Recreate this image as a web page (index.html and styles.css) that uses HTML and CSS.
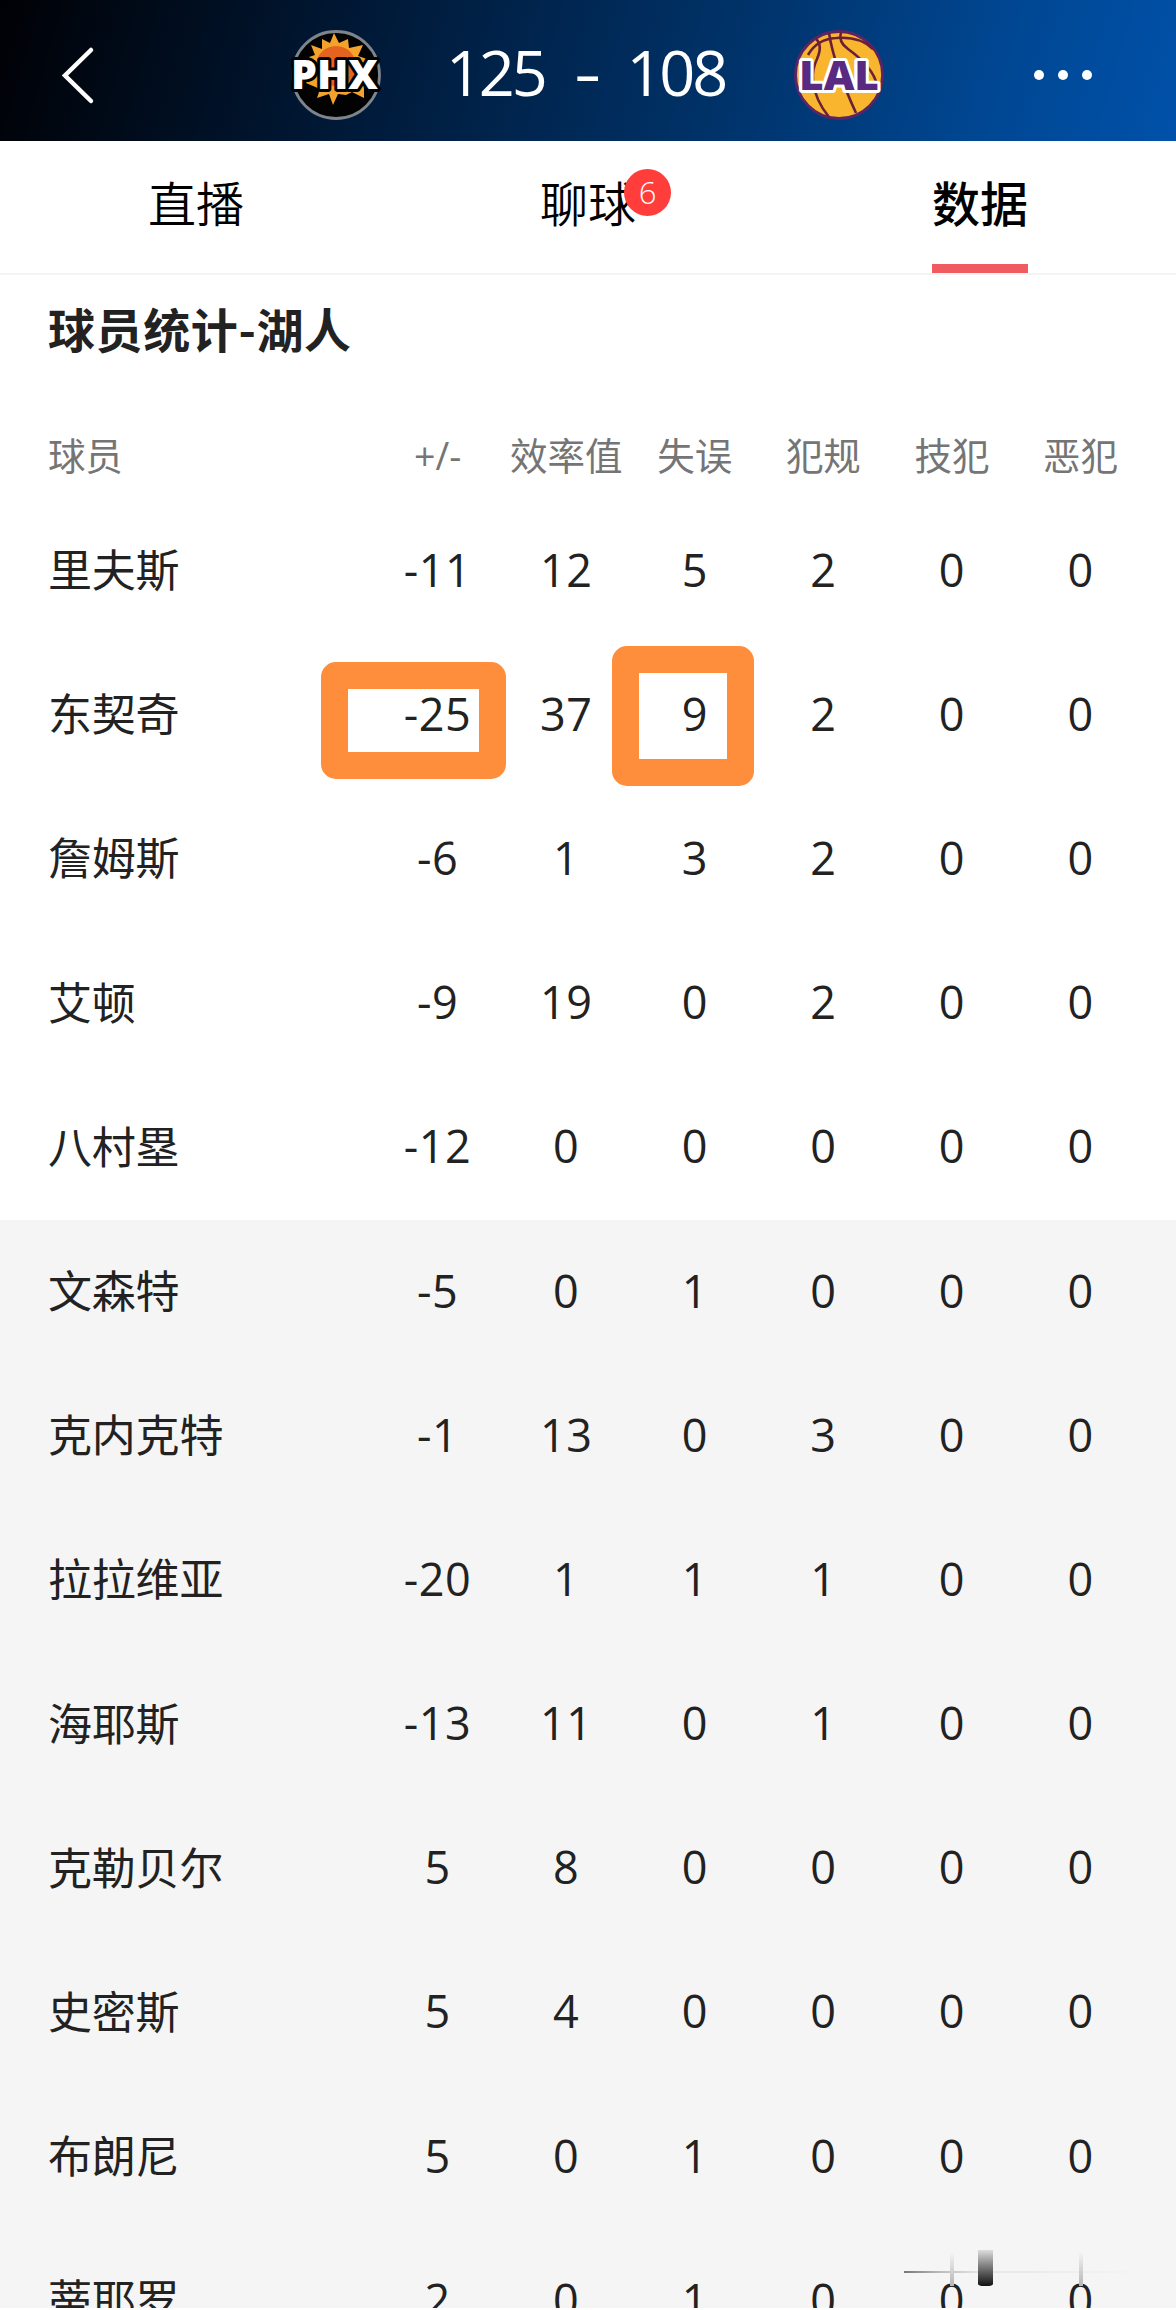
FILE: index.html
```html
<!DOCTYPE html>
<html lang="zh-CN">

<head>
    <meta charset="UTF-8">
    <meta name="viewport" content="width=device-width, initial-scale=1.0">
    <title>球员统计</title>
    <link rel="stylesheet" href="styles.css">
</head>

<body>
    <!-- 比分 -->
    <header class="header">
        <svg class="back" viewBox="0 0 36 60">
            <path d="M31 5 L5 30.500 L31 56" fill="none" stroke="#fff" stroke-width="4.500" stroke-linecap="round" />
        </svg>
        <svg class="logo logo-phx" viewBox="0 0 100 100">
            <circle cx="50" cy="50" r="43.500" fill="#020202" stroke="#7d848c" stroke-width="2.800" />
            <path d="M48 8 L53 18 L62 14 L63 23 L77 20 L72 31 L81 34 L76 40 L78 64 L78 73 L66 67 L60 70 L52 69 L47 80 L43 69 L31 73 L34 64 L20 58 L27 38 L23 32 L29 30 L25 20 L36 24 L36 14 L44 18 Z" fill="#f3a32b" />
            <circle cx="50" cy="41" r="20" fill="#e4641f" />
            <text x="5" y="64" class="logo-text phx-text" textLength="87" lengthAdjust="spacingAndGlyphs">PHX</text>
        </svg>
        <div class="score">
            <span>125</span>
            <span class="dash">-</span>
            <span>108</span>
        </div>
        <svg class="logo logo-lal" viewBox="0 0 100 100">
            <circle cx="50" cy="50" r="43.500" fill="#f8b52d" stroke="#5b2463" stroke-width="2.800" />
            <g fill="none" stroke="#6b2038" stroke-width="2.600">
                <path d="M19 30 Q28 14 47 13 Q71 11 84 24" />
                <path d="M27 14 Q34 20 28 34 Q23 44 24 56 Q26 75 40 92" />
                <path d="M40 8 Q45 40 67 88" />
                <path d="M52 7 Q49 17 59 24 Q84 42 88 60" />
            </g>
            <text x="10" y="65" class="logo-text lal-text" textLength="80" lengthAdjust="spacingAndGlyphs">LAL</text>
        </svg>
        <div class="more"><i></i><i></i><i></i></div>
    </header>

    <nav class="tabs">
        <a class="tab">直播</a>
        <a class="tab">聊球<span class="badge">6</span></a>
        <a class="tab active">数据</a>
    </nav>

    <main class="stats">
        <h1 class="title">球员统计-湖人</h1>

        <div class="row head">
            <span>球员</span><span>+/-</span><span>效率值</span><span>失误</span><span>犯规</span><span>技犯</span><span>恶犯</span>
        </div>

        <!-- 首发 -->
        <div class="row"><span>里夫斯</span><span>-11</span><span>12</span><span>5</span><span>2</span><span>0</span><span>0</span></div>
        <div class="row"><span>东契奇</span><span class="mark mark-wide">-25</span><span>37</span><span class="mark mark-tall">9</span><span>2</span><span>0</span><span>0</span></div>
        <div class="row"><span>詹姆斯</span><span>-6</span><span>1</span><span>3</span><span>2</span><span>0</span><span>0</span></div>
        <div class="row"><span>艾顿</span><span>-9</span><span>19</span><span>0</span><span>2</span><span>0</span><span>0</span></div>
        <div class="row"><span>八村塁</span><span>-12</span><span>0</span><span>0</span><span>0</span><span>0</span><span>0</span></div>

        <!-- 替补 -->
        <div class="bench">
            <div class="row"><span>文森特</span><span>-5</span><span>0</span><span>1</span><span>0</span><span>0</span><span>0</span></div>
            <div class="row"><span>克内克特</span><span>-1</span><span>13</span><span>0</span><span>3</span><span>0</span><span>0</span></div>
            <div class="row"><span>拉拉维亚</span><span>-20</span><span>1</span><span>1</span><span>1</span><span>0</span><span>0</span></div>
            <div class="row"><span>海耶斯</span><span>-13</span><span>11</span><span>0</span><span>1</span><span>0</span><span>0</span></div>
            <div class="row"><span>克勒贝尔</span><span>5</span><span>8</span><span>0</span><span>0</span><span>0</span><span>0</span></div>
            <div class="row"><span>史密斯</span><span>5</span><span>4</span><span>0</span><span>0</span><span>0</span><span>0</span></div>
            <div class="row"><span>布朗尼</span><span>5</span><span>0</span><span>1</span><span>0</span><span>0</span><span>0</span></div>
            <div class="row"><span>蒂耶罗</span><span>2</span><span>0</span><span>1</span><span>0</span><span>0</span><span>0</span></div>
            <div class="smear">
                <i class="smear-line"></i>
                <i class="smear-thin"></i>
                <i class="smear-block"></i>
                <i class="smear-thin smear-right"></i>
            </div>
        </div>
    </main>
</body>

</html>
```
FILE: styles.css
```css
*,
*::after {
    box-sizing: border-box;
}

body {
    margin: 0;
    height: 2310px;
    overflow: hidden;
    background: #fff;
    color: #222;
    font-family: 'Open Sans', 'Noto Sans CJK SC', sans-serif;
}

.header {
    display: flex;
    align-items: center;
    height: 141px;
    padding: 8px 84px 0 60px;
    background: linear-gradient(106deg, #000105 0%, #001a39 32%, #00336a 62%, #004793 84%, #0051aa 100%);
}

.back {
    width: 36px;
    height: 60px;
}

.logo {
    width: 100px;
    height: 100px;
}

.logo-phx {
    margin-left: 190px;
}

.logo-lal {
    margin-left: 64px;
}

.logo-text {
    font-family: 'Open Sans', sans-serif;
    font-weight: 800;
    font-size: 40px;
    stroke-linejoin: round;
    paint-order: stroke;
}

.phx-text {
    fill: #fff;
    stroke: #020202;
    stroke-width: 6px;
}

.lal-text {
    fill: #5a2a83;
    stroke: #fff;
    stroke-width: 6px;
}

.score {
    display: flex;
    justify-content: space-between;
    width: 279px;
    margin-left: 60px;
    padding-bottom: 6px;
    color: #fff;
    font-size: 63px;
    line-height: 90px;
    letter-spacing: -3.2px;
}

.dash {
    transform: scaleX(1.35);
}

.more {
    display: flex;
    justify-content: space-between;
    width: 58px;
    margin-left: auto;
}

.more i {
    width: 10px;
    height: 10px;
    border-radius: 50%;
    background: #fff;
}

.tabs {
    display: flex;
    height: 134px;
    border-bottom: 2px solid #f4f4f4;
}

.tab {
    position: relative;
    display: flex;
    justify-content: center;
    flex: 1;
    color: #000;
    font-family: 'Noto Sans CJK SC', sans-serif;
    font-weight: 350;
    font-size: 48px;
    line-height: 121px;
}

.tab.active {
    font-weight: 500;
}

.tab.active::after {
    content: "";
    position: absolute;
    bottom: 0;
    width: 96px;
    height: 9px;
    background: #ef5b5f;
}

.badge {
    position: absolute;
    left: 232px;
    top: 28px;
    width: 47px;
    height: 47px;
    border-radius: 50%;
    background: #ff3d3a;
    color: #fff;
    font-family: 'Open Sans', sans-serif;
    font-size: 31px;
    line-height: 46px;
    text-align: center;
}

.title {
    margin: 0;
    padding-left: 48px;
    height: 138px;
    font-family: 'Noto Sans CJK SC', sans-serif;
    font-size: 47px;
    font-weight: 700;
    line-height: 105px;
    letter-spacing: 0.6px;
}

.row {
    display: grid;
    grid-template-columns: 325.3px repeat(6, 128.6px);
    align-items: center;
    height: 144.2px;
    padding: 0 0 3px 48px;
    font-size: 45px;
    line-height: 64px;
    text-align: center;
    letter-spacing: 0.5px;
    white-space: nowrap;
}

.row span:first-child {
    padding-bottom: 3px;
    font-family: 'Noto Sans CJK SC', sans-serif;
    font-size: 44px;
    letter-spacing: -0.2px;
    text-align: left;
}

.row.head {
    height: 86px;
    padding-bottom: 1px;
    color: #757575;
    font-size: 37.5px;
    letter-spacing: 0;
}

.row.head span:first-child {
    font-size: 37.5px;
}

/* 橙色标记框 */
.mark {
    position: relative;
}

.mark::after {
    content: "";
    position: absolute;
    border: 27px solid #fe8d3c;
    border-radius: 15px;
}

.mark-wide::after {
    left: -52px;
    top: -20px;
    width: 185px;
    height: 117px;
}

.mark-tall::after {
    left: -18px;
    top: -36px;
    width: 142px;
    height: 140px;
}

.bench {
    position: relative;
    height: 1088px;
    overflow: hidden;
    background: #f5f5f5;
}

.smear {
    position: absolute;
    left: 904px;
    top: 1030px;
    width: 246px;
    height: 36px;
}

.smear i {
    position: absolute;
}

.smear-line {
    left: 0;
    top: 21px;
    width: 240px;
    height: 2px;
    background: linear-gradient(to right, #777, #bbb 15%, #e6e6e6 32%, #f5f5f5);
}

.smear-block {
    left: 74px;
    top: 0;
    width: 15px;
    height: 36px;
    border-radius: 0 0 6px 6px / 0 0 2px 2px;
    background: linear-gradient(#ddd, #888 40%, #111);
}

.smear-thin {
    left: 46px;
    top: 2px;
    width: 4px;
    height: 34px;
    background: linear-gradient(#f5f5f5, #b5b5b5);
}

.smear-right {
    left: 175px;
}
```
